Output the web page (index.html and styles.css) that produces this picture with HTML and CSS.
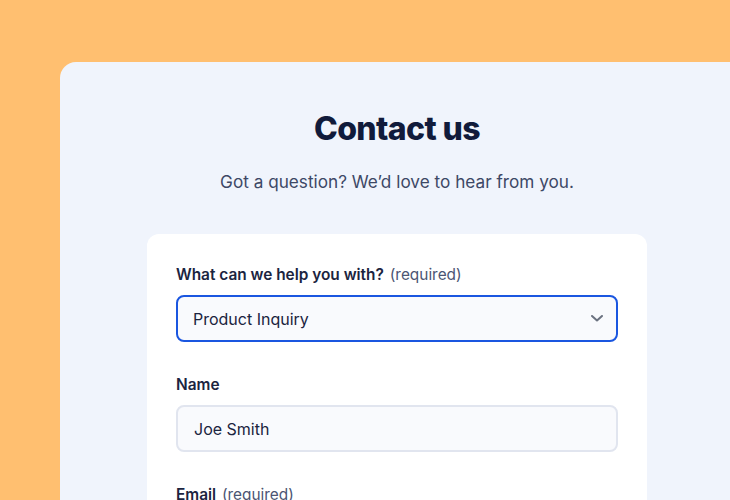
FILE: index.html
```html
<!DOCTYPE html>
<html lang="en">
<head>
<meta charset="utf-8">
<title>Contact us</title>
<link rel="stylesheet" href="styles.css">
</head>
<body>
<main class="panel">
  <h1 class="title">Contact us</h1>
  <p class="subtitle">Got a question? We’d love to hear from you.</p>
  <form class="card">
    <div class="field">
      <label class="label">What can we help you with? <span class="req">(required)</span></label>
      <div class="select">
        <span>Product Inquiry</span>
        <svg class="chev" width="12" height="7" viewBox="0 0 12 7"><path d="M1 1l5 4.5L11 1" fill="none" stroke="#6b7280" stroke-width="2" stroke-linecap="round" stroke-linejoin="round"/></svg>
      </div>
    </div>
    <div class="field">
      <label class="label">Name</label>
      <div class="input">Joe Smith</div>
    </div>
    <div class="field">
      <label class="label">Email <span class="req">(required)</span></label>
      <div class="input"></div>
    </div>
  </form>
</main>
</body>
</html>
```
FILE: styles.css
```css
* { box-sizing: border-box; }
html, body { margin: 0; padding: 0; }
body {
  background: #ffbf70;
  font-family: Inter, "Noto Sans", sans-serif;
  width: 730px;
  height: 500px;
  overflow: hidden;
  padding: 62px 0 0 60px;
}
.panel {
  width: 670px;
  height: 438px;
  overflow: hidden;
  background: #f0f4fc;
  border-radius: 16px 0 0 0;
  display: flex;
  flex-direction: column;
  align-items: center;
  padding: 48px 0 0 4px;
}
.title {
  margin: 0;
  font-size: 32px;
  font-weight: 800;
  letter-spacing: -0.6px;
  color: #111b3b;
  line-height: 38px;
}
.subtitle {
  margin: 22px 0 0;
  font-size: 17.2px;
  color: #3d4866;
  line-height: 24px;
}
.card {
  margin-top: 40px;
  width: 500px;
  flex-shrink: 0;
  background: #ffffff;
  border-radius: 12px;
  padding: 31px 29px;
  display: flex;
  flex-direction: column;
  gap: 33px;
}
.field { display: flex; flex-direction: column; gap: 10px; }
.label {
  font-size: 15.4px;
  font-weight: 600;
  color: #1b2440;
  line-height: 20px;
}
.req { font-weight: 400; color: #4b5573; margin-left: 2px; }
.select, .input {
  height: 47px;
  flex-shrink: 0;
  border-radius: 8px;
  background: #f9fafd;
  font-size: 16px;
  color: #1b2440;
  display: flex;
  align-items: center;
  padding: 0 15px;
}
.select {
  border: 2px solid #1a56e0;
  justify-content: space-between;
}
.input {
  border: 2px solid #e1e5ef;
  padding-left: 16px;
}
.chev { margin-right: -2px; }
```
